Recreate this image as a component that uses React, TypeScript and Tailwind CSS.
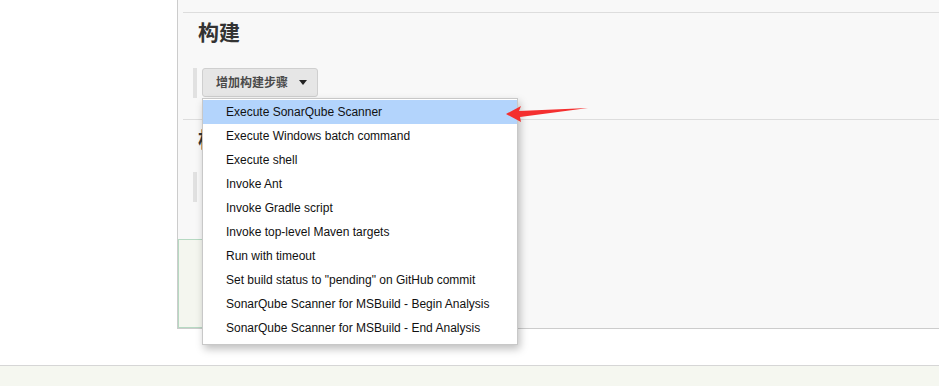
import React from 'react';

const items = [
  'Execute SonarQube Scanner',
  'Execute Windows batch command',
  'Execute shell',
  'Invoke Ant',
  'Invoke Gradle script',
  'Invoke top-level Maven targets',
  'Run with timeout',
  'Set build status to "pending" on GitHub commit',
  'SonarQube Scanner for MSBuild - Begin Analysis',
  'SonarQube Scanner for MSBuild - End Analysis',
];

const font = { fontFamily: '"Liberation Sans", Arial, "Noto Sans CJK SC", sans-serif' };

const StepButton: React.FC<{ label: string }> = ({ label }) => (
  <div className="flex items-stretch h-[30px] pl-[10px]">
    <div className="w-[4px] bg-[#e1e1e1]" />
    <button className="ml-[5px] h-[29px] flex items-center pl-[13px] pr-[10px] bg-[#e6e6e6] border border-[#cfcfcf] rounded-[3px] text-[12px] font-bold text-[#4a4a4a]">
      <span>{label}</span>
      <span className="ml-[11px] w-0 h-0 border-l-[4px] border-r-[4px] border-t-[5px] border-l-transparent border-r-transparent border-t-[#222]" />
    </button>
  </div>
);

const App: React.FC = () => {
  return (
    <div className="relative w-[939px] h-[386px] overflow-hidden bg-white" style={font}>
      <div className="flex h-[365px]">
        <div className="w-[177px] bg-white" />
        <div className="flex-1 h-[329px] bg-[#f8f8f8] border-l border-b border-[#cccccc] flex flex-col">
          {/* build section */}
          <div className="ml-[5px] mt-[12px] border-t border-[#dddddd] h-[107px]">
            <h2 className="pl-[15px] pt-[5px] text-[21px] leading-[30px] font-bold text-[#333]">构建</h2>
            <div className="mt-[20px]">
              <StepButton label="增加构建步骤" />
            </div>
          </div>
          {/* post build section */}
          <div className="ml-[5px] border-t border-[#dddddd] h-[120px]">
            <h2 className="pl-[15px] pt-[5px] text-[21px] leading-[30px] font-bold text-[#333]">构建后操作</h2>
            <div className="mt-[17px]">
              <StepButton label="增加构建后操作步骤" />
            </div>
          </div>
          <div className="w-[320px] flex-1 bg-[#f4f6ef] border border-[#b6d9c2]" />
        </div>
      </div>
      <div className="h-[21px] border-t border-[#d6d6d6] bg-[#f5f7f0]" />

      {/* dropdown menu */}
      <div className="absolute left-[202px] top-[98px] w-[316px] bg-white border border-[#c8c8c8] shadow-[2px_4px_8px_rgba(0,0,0,0.25)] pt-[1px] pb-[4px]">
        {items.map((item, i) => (
          <div
            key={item}
            className={`h-[24px] flex items-center pl-[23px] text-[12px] text-[#111] ${i === 0 ? 'bg-[#b3d4fc]' : ''}`}
          >
            {item}
          </div>
        ))}
      </div>

      {/* red arrow */}
      <svg className="absolute left-[500px] top-[100px]" width="95" height="28" viewBox="0 0 95 28">
        <polygon points="6,14 21,6 19,11 88,8 20,17 21,22" fill="#f42f2f" />
      </svg>
    </div>
  );
};

export default App;
